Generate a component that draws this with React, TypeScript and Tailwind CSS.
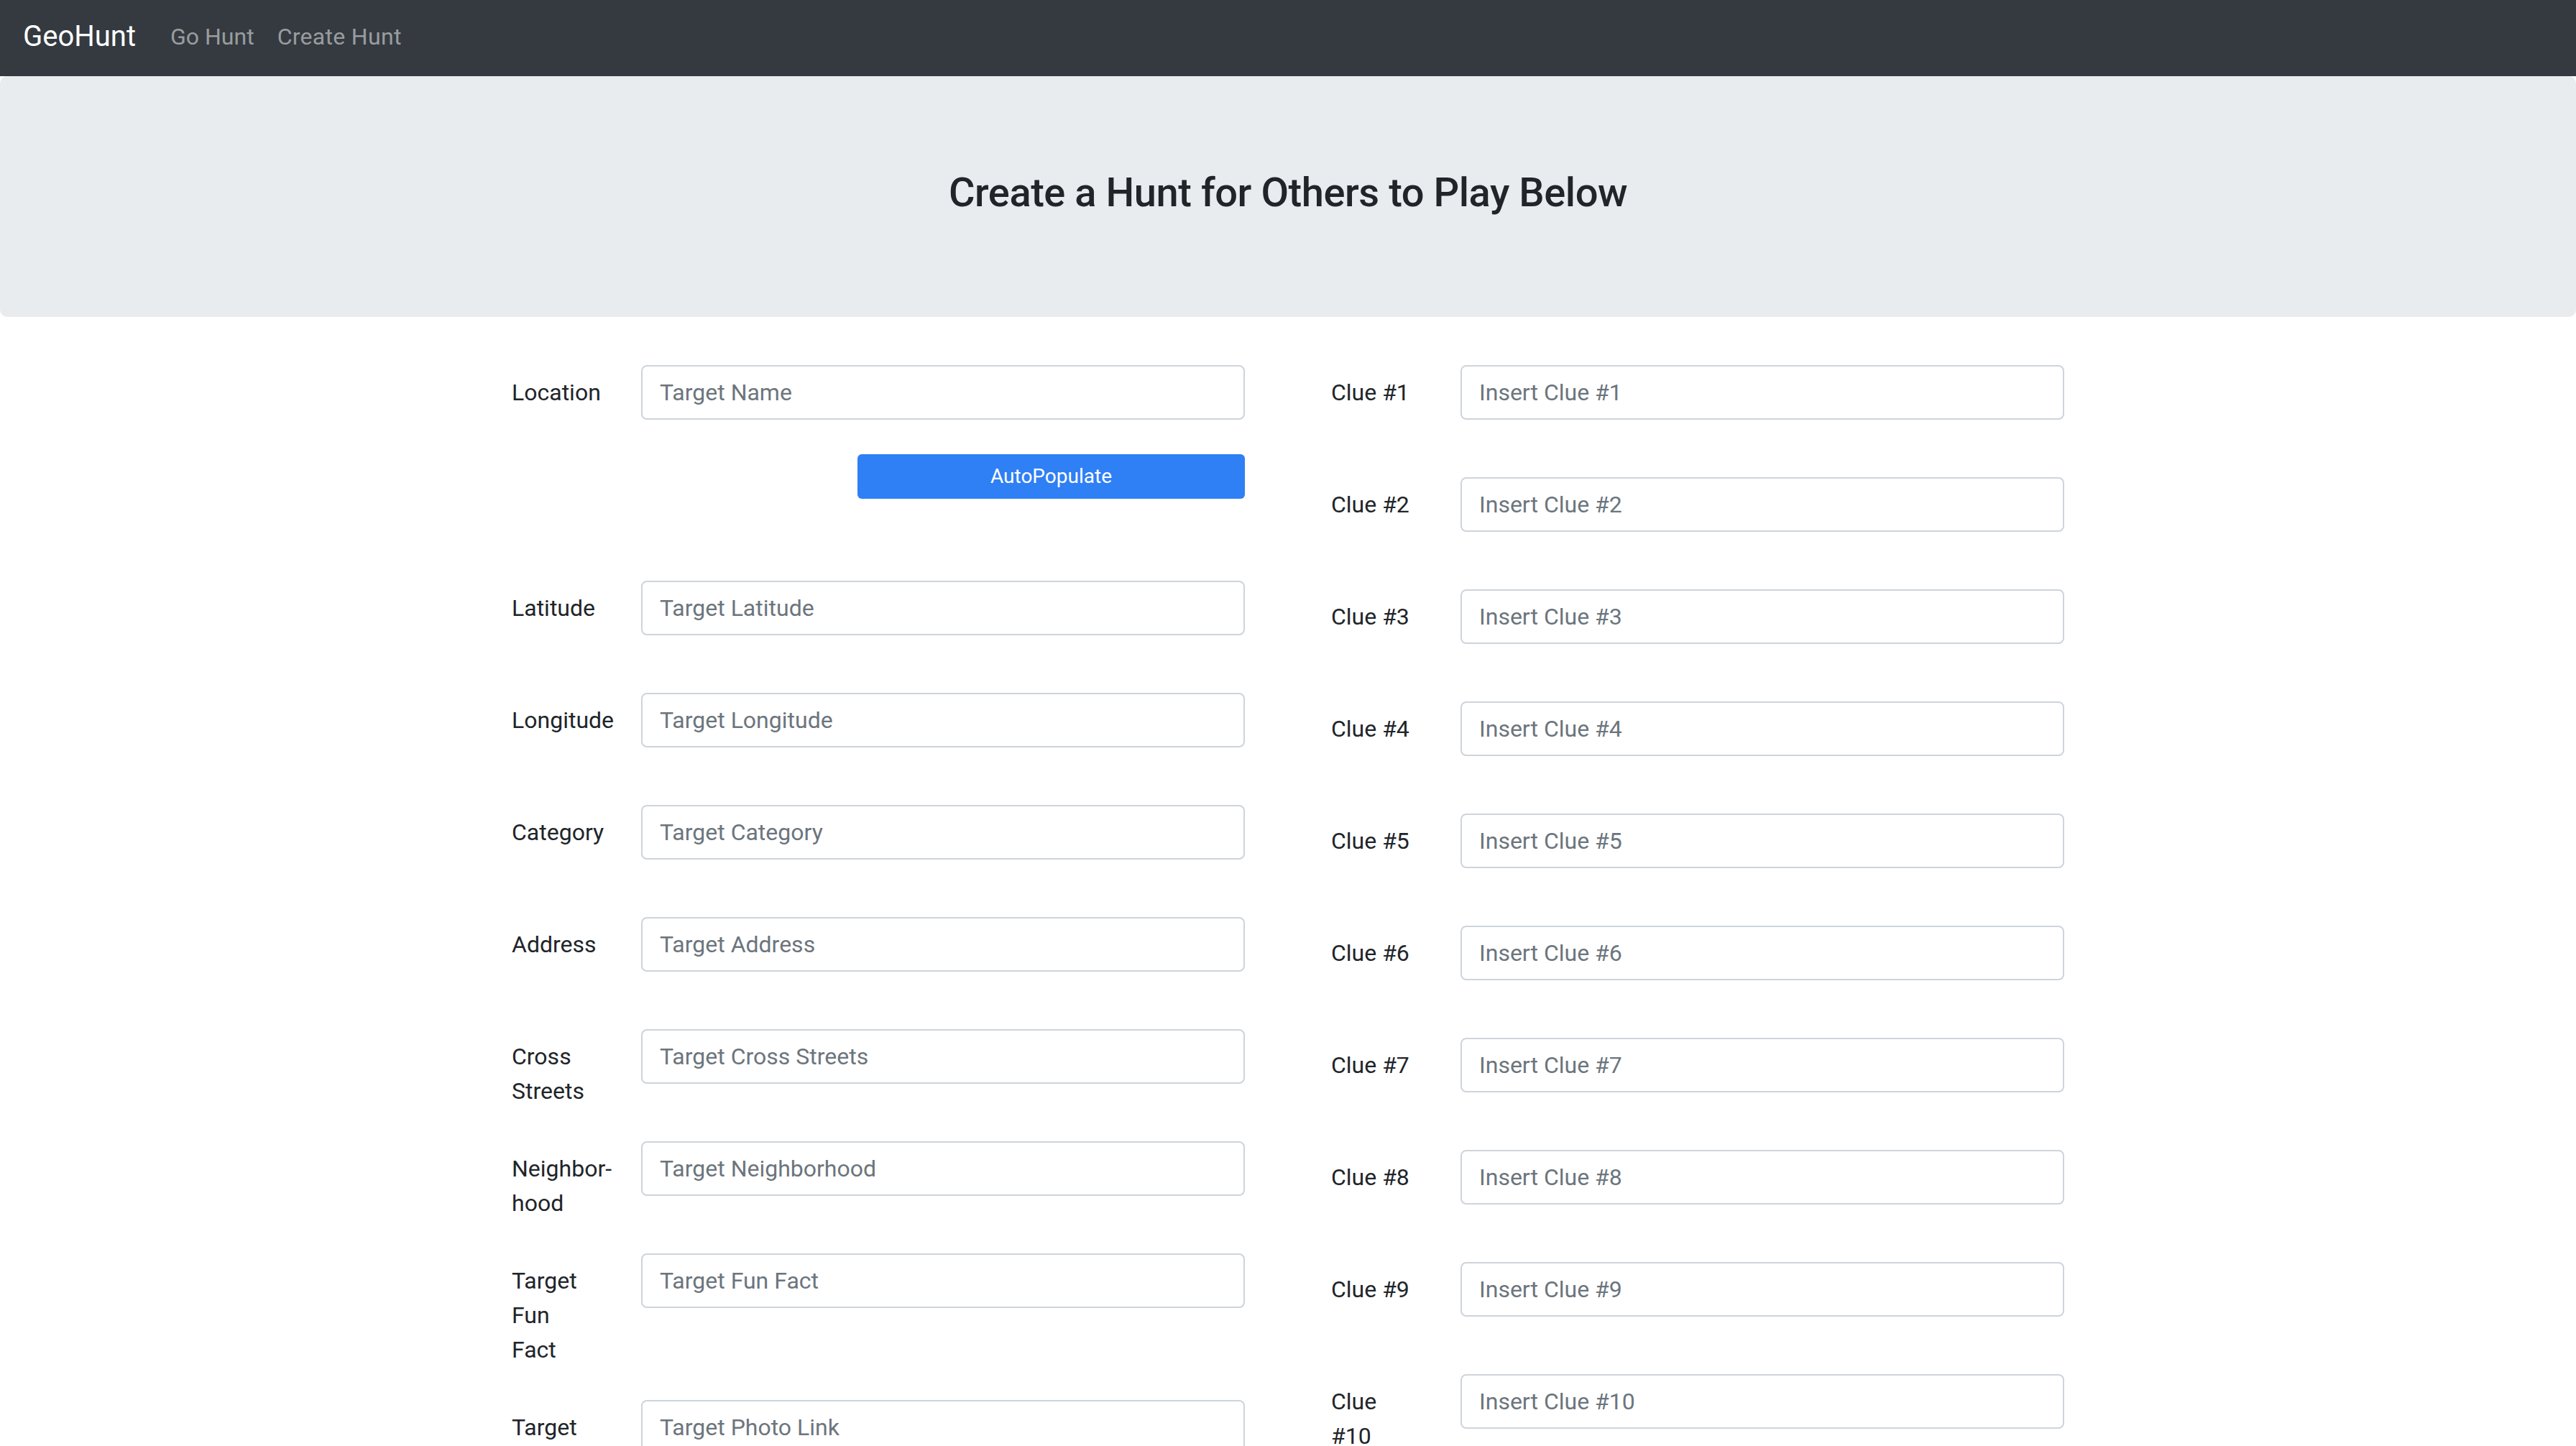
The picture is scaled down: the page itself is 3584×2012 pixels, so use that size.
import React from "react";

const leftFields = [
  { label: "Latitude", placeholder: "Target Latitude" },
  { label: "Longitude", placeholder: "Target Longitude" },
  { label: "Category", placeholder: "Target Category" },
  { label: "Address", placeholder: "Target Address" },
  { label: "Cross Streets", placeholder: "Target Cross Streets" },
  { label: "Neighbor-hood", placeholder: "Target Neighborhood" },
  { label: "Target Fun Fact", placeholder: "Target Fun Fact" },
  { label: "Target Photo Link", placeholder: "Target Photo Link" },
];

const clues = Array.from({ length: 10 }, (_, i) => i + 1);

function Field({ label, placeholder }: { label: string; placeholder: string }) {
  return (
    <div className="flex items-start mb-[32px]">
      <label className="w-[120px] shrink-0 mr-[60px] pt-[14px] pb-[14px] text-[32px] leading-[48px] text-[#212529]">
        {label}
      </label>
      <div className="flex-1">
        <input
          className="block w-full h-[76px] px-[24px] text-[32px] leading-[48px] text-[#495057] bg-white border-2 border-[#ced4da] rounded-[8px] placeholder:text-[#6c757d] outline-none"
          placeholder={placeholder}
        />
        <div className="h-[48px]" />
      </div>
    </div>
  );
}

export default function App() {
  return (
    <div className="min-h-screen bg-white font-['Roboto','Liberation_Sans',sans-serif]">
      <nav className="h-[106px] bg-[#343a40] flex items-center px-[32px] pb-[4px]">
        <span className="text-[40px] leading-[60px] text-white mr-[32px]">GeoHunt</span>
        <a className="px-[16px] text-[32px] leading-[48px] text-white/50">Go Hunt</a>
        <a className="px-[16px] text-[32px] leading-[48px] text-white/50 tracking-[0.3px]">Create Hunt</a>
      </nav>

      <div className="h-[335px] bg-[#e9ecef] rounded-[10px] pt-[129px] text-center">
        <h3 className="text-[56px] leading-[67px] font-medium tracking-[-0.45px] text-[#212529]">
          Create a Hunt for Others to Play Below
        </h3>
      </div>

      <div className="mt-[67px] mx-auto w-[2160px] grid grid-cols-2 gap-x-[120px] items-start">
        <div>
          <div className="flex items-start mb-[32px]">
            <label className="w-[120px] shrink-0 mr-[60px] py-[14px] text-[32px] leading-[48px] text-[#212529]">
              Location
            </label>
            <div className="flex-1">
              <input
                className="block w-full h-[76px] px-[24px] text-[32px] leading-[48px] text-[#495057] bg-white border-2 border-[#ced4da] rounded-[8px] placeholder:text-[#6c757d] outline-none"
                placeholder="Target Name"
              />
              <div className="h-[48px]" />
              <div className="flex justify-end">
                <button className="w-[539px] h-[62px] bg-[#2f7ff5] text-white text-[28px] leading-[42px] rounded-[6px]">
                  AutoPopulate
                </button>
              </div>
              <div className="h-[82px]" />
            </div>
          </div>
          {leftFields.map((f) => (
            <Field key={f.label} label={f.label} placeholder={f.placeholder} />
          ))}
        </div>

        <div>
          {clues.map((n) => (
            <Field key={n} label={`Clue #${n}`} placeholder={`Insert Clue #${n}`} />
          ))}
        </div>
      </div>
    </div>
  );
}
